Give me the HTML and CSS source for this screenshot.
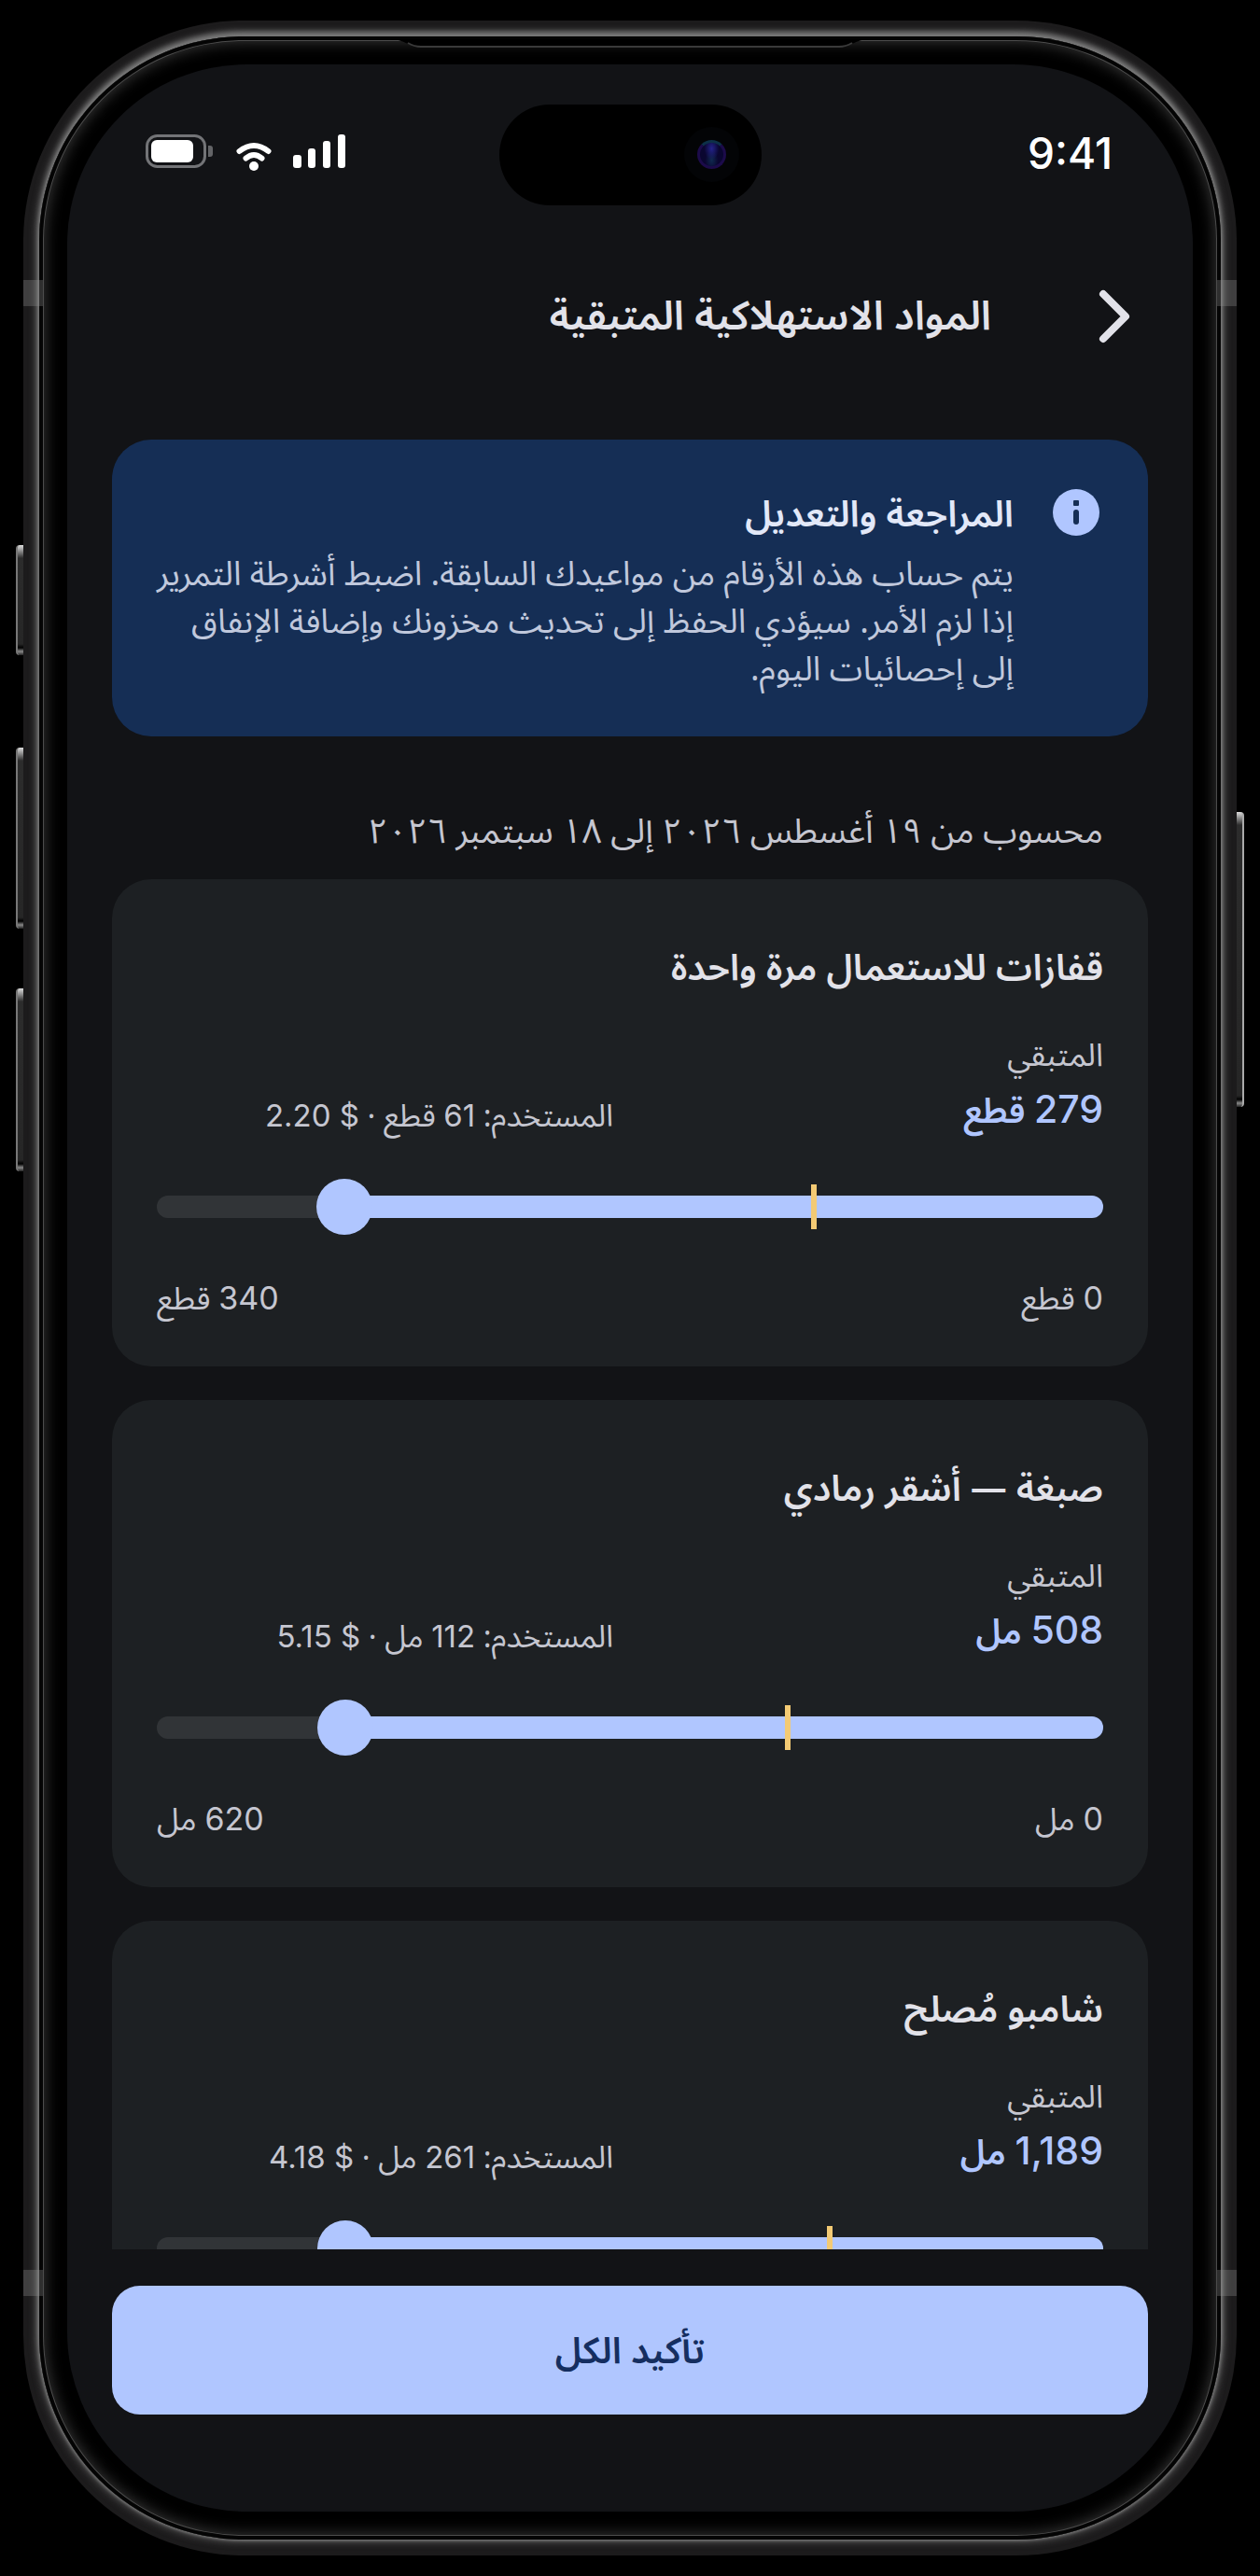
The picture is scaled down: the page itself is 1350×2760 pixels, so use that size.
FILE: index.html
```html
<!DOCTYPE html>
<html lang="ar" dir="rtl">
<head>
    <meta charset="utf-8">
    <title>المواد الاستهلاكية المتبقية</title>
    <link rel="stylesheet" href="styles.css">
</head>
<body>
    <div class="device">
        <span class="side-key key-action"></span>
        <span class="side-key key-up"></span>
        <span class="side-key key-down"></span>
        <span class="side-key key-power"></span>

        <div class="frame">
            <span class="band band-top"></span>
            <span class="band band-bottom"></span>
            <div class="bezel">
                <svg class="earpiece" viewBox="0 0 520 12" aria-hidden="true">
                    <path d="M0 0H520C500 0 502 7 484 7H36C18 7 20 0 0 0Z" fill="#000"/>
                    <path d="M22 4C27 7 30 8 36 8H484C490 8 493 7 498 4" fill="none" stroke="#3a3a3a" stroke-width="2"/>
                </svg>
                <div class="screen">
                    <div class="island"><span class="camera"></span></div>

                    <div class="status-bar">
                        <span class="time">9:41</span>
                        <div class="status-icons">
                            <svg width="56" height="36" viewBox="0 0 56 36" aria-hidden="true">
                                <g fill="#fff">
                                    <rect x="0" y="22" width="9" height="14" rx="3"/>
                                    <rect x="16" y="15" width="8" height="21" rx="3"/>
                                    <rect x="32" y="7" width="8" height="29" rx="3"/>
                                    <rect x="48" y="0" width="8" height="36" rx="3"/>
                                </g>
                            </svg>
                            <svg width="38" height="36" viewBox="0 0 38 36" aria-hidden="true">
                                <path d="M4.500 18Q20 6 35.500 18" fill="none" stroke="#fff" stroke-width="6" stroke-linecap="round"/>
                                <path d="M11.500 25.500Q20 18.500 28.500 25.500" fill="none" stroke="#fff" stroke-width="6" stroke-linecap="round"/>
                                <circle cx="20" cy="34" r="5" fill="#fff"/>
                            </svg>
                            <svg width="72" height="36" viewBox="0 0 72 36" aria-hidden="true">
                                <rect x="1.500" y="1.500" width="62" height="33" rx="11" fill="none" stroke="#737477" stroke-width="3"/>
                                <rect x="6" y="6" width="45" height="24" rx="6" fill="#fff"/>
                                <path d="M67 12H69Q72 12 72 15V21Q72 24 69 24H67Z" fill="#636467"/>
                            </svg>
                        </div>
                    </div>

                    <header class="app-bar">
                        <button class="back" type="button" aria-label="رجوع">
                            <svg width="36" height="60" viewBox="0 0 36 60" aria-hidden="true">
                                <path d="M6 6L30 30L6 54" fill="none" stroke="#e2e2e9" stroke-width="8" stroke-linecap="round" stroke-linejoin="round"/>
                            </svg>
                        </button>
                        <h1>المواد الاستهلاكية المتبقية</h1>
                    </header>

                    <main class="content">
                        <section class="notice">
                            <svg class="notice-icon" width="50" height="50" viewBox="0 0 50 50" aria-hidden="true">
                                <circle cx="25" cy="25" r="25" fill="#b0c6ff"/>
                                <rect x="22" y="12" width="6" height="6" rx="1" fill="#152e55"/>
                                <rect x="22" y="22" width="6" height="16" rx="3" fill="#152e55"/>
                            </svg>
                            <div class="notice-body">
                                <h2>المراجعة والتعديل</h2>
                                <p>يتم حساب هذه الأرقام من مواعيدك السابقة. اضبط أشرطة التمرير<br>إذا لزم الأمر. سيؤدي الحفظ إلى تحديث مخزونك وإضافة الإنفاق<br>إلى إحصائيات اليوم.</p>
                            </div>
                        </section>

                        <p class="period">محسوب من ١٩ أغسطس ٢٠٢٦ إلى ١٨ سبتمبر ٢٠٢٦</p>

                        <section class="card">
                            <h2>قفازات للاستعمال مرة واحدة</h2>
                            <div class="amounts">
                                <label class="left" for="gloves">
                                    <span class="caption">المتبقي</span>
                                    <span class="value"><b>279</b> قطع</span>
                                </label>
                                <p class="used">المستخدم: <b>61</b> قطع · <b>$ 2.20</b></p>
                            </div>
                            <div class="slider">
                                <input type="range" id="gloves" min="0" max="340" value="279" style="--fill: 82%">
                                <span class="mark" style="right: 30.3%"></span>
                            </div>
                            <div class="bounds">
                                <span><b>0</b> قطع</span>
                                <span><b>340</b> قطع</span>
                            </div>
                        </section>

                        <section class="card">
                            <h2>صبغة — أشقر رمادي</h2>
                            <div class="amounts">
                                <label class="left" for="dye">
                                    <span class="caption">المتبقي</span>
                                    <span class="value"><b>508</b> مل</span>
                                </label>
                                <p class="used">المستخدم: <b>112</b> مل · <b>$ 5.15</b></p>
                            </div>
                            <div class="slider">
                                <input type="range" id="dye" min="0" max="620" value="508" style="--fill: 82%">
                                <span class="mark" style="right: 33%"></span>
                            </div>
                            <div class="bounds">
                                <span><b>0</b> مل</span>
                                <span><b>620</b> مل</span>
                            </div>
                        </section>

                        <section class="card">
                            <h2>شامبو مُصلح</h2>
                            <div class="amounts">
                                <label class="left" for="shampoo">
                                    <span class="caption">المتبقي</span>
                                    <span class="value"><b>1,189</b> مل</span>
                                </label>
                                <p class="used">المستخدم: <b>261</b> مل · <b>$ 4.18</b></p>
                            </div>
                            <div class="slider">
                                <input type="range" id="shampoo" min="0" max="1450" value="1189" style="--fill: 82%">
                                <span class="mark" style="right: 28.6%"></span>
                            </div>
                        </section>
                    </main>

                    <footer class="actions">
                        <button class="confirm" type="button">تأكيد الكل</button>
                    </footer>
                </div>
            </div>
        </div>
    </div>
</body>
</html>
```
FILE: styles.css
```css
* {
    box-sizing: border-box;
    margin: 0;
    padding: 0;
}
body {
    height: 100vh;
    padding: 22px 25px;
    background-color: #000;
    color: #e2e2e9;
    font-family: "Noto Sans Arabic", "DejaVu Sans", sans-serif;
    overflow: hidden;
}
b, .time {
    font-family: Inter, "Liberation Sans", sans-serif;
    font-weight: inherit;
    line-height: 1;
}

/* Phone shell */
.device {
    position: relative;
    height: 100%;
}
.frame {
    position: relative;
    height: 100%;
    padding: 17px;
    border-radius: 236px;
    background-color: #1c1b1c;
    overflow: hidden;
}
.bezel {
    position: relative;
    height: 100%;
    padding: 30px;
    border-radius: 219px;
    background-color: #000;
    box-shadow: 0 0 3px 1px #7a7a7a, 0 -1px 10px 2px #6e6e6e, 0 -4px 6px #8a8a8a,
        inset 0 0 0 4px #040404, inset 0 0 0 5px #4c4c4c, inset 0 0 16px 6px #383838;
}
.screen {
    position: relative;
    display: flex;
    flex-direction: column;
    height: 100%;
    border-radius: 192px;
    background-color: #121316;
    overflow: hidden;
}
.side-key {
    position: absolute;
    left: -8px;
    width: 8px;
    border-radius: 4px 0 0 4px;
    background: linear-gradient(#ddd, #2c2c2c 14px, #262626 calc(100% - 12px), #000 calc(100% - 8px), #888 calc(100% - 4px), #222);
    border-left: 2px solid #777;
}
.key-action { top: 562px; height: 118px; }
.key-up { top: 779px; height: 194px; }
.key-down { top: 1037px; height: 196px; }
.key-power {
    top: 848px;
    left: auto;
    right: -8px;
    height: 316px;
    border-left: 0;
    border-right: 2px solid #aaa;
    border-radius: 0 4px 4px 0;
}
.band {
    position: absolute;
    z-index: 1;
    left: 0;
    right: 0;
    height: 28px;
    border: solid rgba(150, 150, 150, 0.3);
    border-width: 0 21px;
}
.band-top { top: 278px; }
.band-bottom { bottom: 278px; }
.earpiece {
    position: absolute;
    top: 3px;
    left: calc(50% - 260px);
    width: 520px;
    height: 12px;
}
.island {
    position: absolute;
    top: 43px;
    left: calc(50% - 140px);
    width: 281px;
    height: 108px;
    border-radius: 54px;
    background-color: #000;
}
.camera {
    position: absolute;
    top: 38px;
    right: 38px;
    width: 31px;
    height: 31px;
    border-radius: 50%;
    background: radial-gradient(ellipse at 50% 25%, #24248a, transparent 45%), radial-gradient(ellipse at 50% 75%, #10294f, transparent 40%), #0a0630;
    border: 3px solid #1c0b4a;
    border-top-color: #0d3048;
    box-shadow: 0 0 0 14px #030406;
}

/* Status bar and title */
.status-bar {
    display: flex;
    flex: none;
    align-items: center;
    justify-content: space-between;
    height: 186px;
    padding: 0 86px 0 84px;
}
.time {
    padding-top: 4px;
    direction: ltr;
    color: #fff;
    font-size: 46px;
    font-weight: 500;
}
.status-icons {
    display: flex;
    gap: 24px;
}
.status-icons svg {
    overflow: visible;
}
.app-bar {
    display: flex;
    flex: none;
    align-items: center;
    gap: 114px;
    height: 168px;
    padding: 0 66px;
}
.back {
    display: flex;
    border: 0;
    background: none;
    cursor: pointer;
}
h1 {
    font-size: 43px;
    font-weight: 600;
    white-space: nowrap;
}

/* Scrolling content */
.content {
    flex: 1;
    min-height: 0;
    padding: 48px 48px 0;
    overflow: hidden;
}
.notice {
    display: flex;
    gap: 42px;
    padding: 51px 52px 45px;
    border-radius: 42px;
    background-color: #152e55;
}
.notice-icon {
    flex: none;
    margin-top: 2px;
}
.notice-body {
    flex: 1;
}
.notice h2 {
    margin-bottom: 9px;
    color: #e2e8f8;
    font-size: 39px;
    font-weight: 600;
    line-height: 60px;
}
.notice p {
    color: #c0c8dc;
    font-size: 36px;
    line-height: 51px;
    white-space: nowrap;
}
.period {
    margin: 75px 48px 24px;
    color: #c5c6d0;
    font-size: 37px;
    line-height: 54px;
    white-space: nowrap;
}
.card {
    margin-bottom: 36px;
    padding: 63px 48px 45px;
    border-radius: 42px;
    background-color: #1d2023;
}
.card h2 {
    margin-bottom: 33px;
    font-size: 39px;
    font-weight: 600;
    line-height: 66px;
}
.amounts {
    display: grid;
    grid-template-columns: 1fr 1fr;
    gap: 36px;
    align-items: end;
    margin-bottom: 21px;
}
.left {
    display: flex;
    flex-direction: column;
}
.caption, .used, .bounds {
    color: #c5c6d0;
    font-size: 34px;
    line-height: 54px;
    white-space: nowrap;
}
.used, .used b {
    font-size: 33px;
}
.value {
    color: #b0c6ff;
    font-size: 37px;
    font-weight: 600;
    line-height: 66px;
}
.value b {
    font-size: 41px;
    font-weight: 500;
}
.slider {
    position: relative;
    height: 96px;
    margin-bottom: 24px;
}
.slider input {
    display: block;
    width: 100%;
    height: 96px;
    background: none;
    appearance: none;
    -webkit-appearance: none;
}
.slider input::-webkit-slider-runnable-track {
    height: 24px;
    border-radius: 12px;
    background: linear-gradient(to left, #b0c6ff var(--fill), #313437 var(--fill));
}
.slider input::-webkit-slider-thumb {
    -webkit-appearance: none;
    width: 60px;
    height: 60px;
    margin-top: -18px;
    border-radius: 50%;
    background-color: #b0c6ff;
}
.mark {
    position: absolute;
    top: 24px;
    width: 6px;
    height: 48px;
    background-color: #f3ca74;
    pointer-events: none;
}
.bounds {
    display: flex;
    justify-content: space-between;
}

/* Bottom button */
.actions {
    flex: none;
    padding: 39px 48px 104px;
}
.confirm {
    display: block;
    width: 100%;
    height: 138px;
    padding-top: 3px;
    border: 0;
    border-radius: 30px;
    background-color: #b0c6ff;
    color: #152e60;
    font-family: inherit;
    font-size: 39px;
    font-weight: 600;
    cursor: pointer;
}
```
